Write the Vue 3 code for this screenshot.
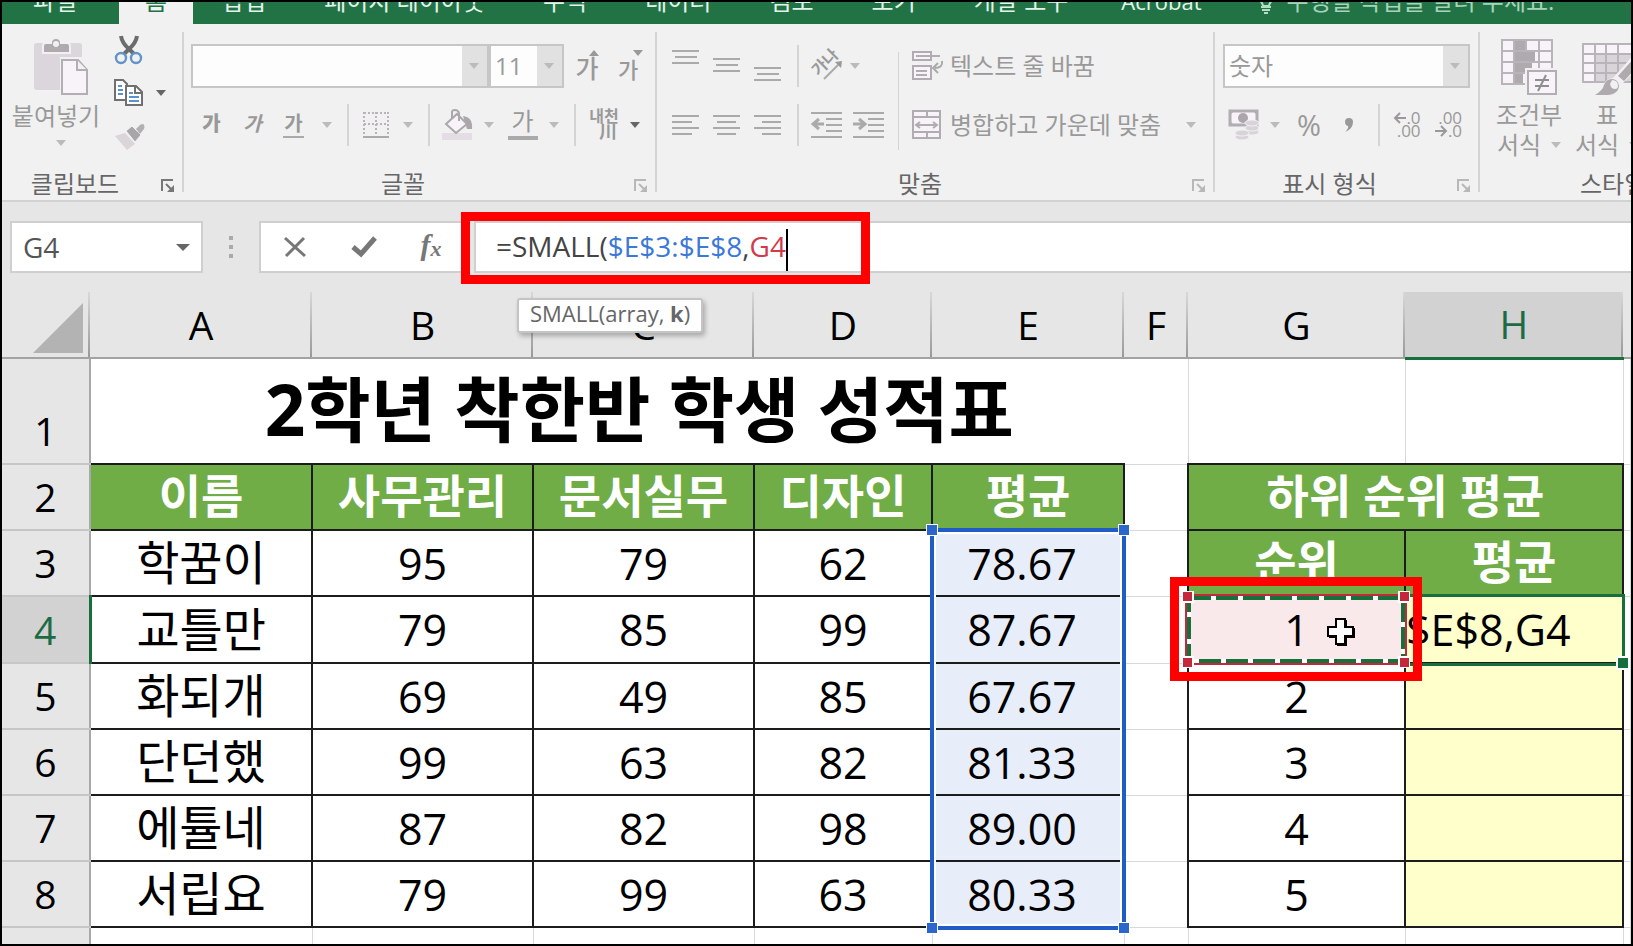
<script setup>
import { ref } from 'vue'

const tabs = ['삽입', '페이지 레이아웃', '수식', '데이터', '검토', '보기', '개발 도구']
const columns = ['A', 'B', 'C', 'D', 'E', 'F', 'G', 'H']
const students = [
  { row: 3, name: '학꿈이', scores: ['95', '79', '62'], avg: '78.67' },
  { row: 4, name: '교틀만', scores: ['79', '85', '99'], avg: '87.67', rank: '1' },
  { row: 5, name: '화되개', scores: ['69', '49', '85'], avg: '67.67', rank: '2' },
  { row: 6, name: '단던했', scores: ['99', '63', '82'], avg: '81.33', rank: '3' },
  { row: 7, name: '에튤네', scores: ['87', '82', '98'], avg: '89.00', rank: '4' },
  { row: 8, name: '서립요', scores: ['79', '99', '63'], avg: '80.33', rank: '5' }
]
const cellName = ref('G4')
const fontName = ref('')
const fontSize = ref('11')
const numberFormat = ref('숫자')
</script>

<template>
  <div class="window">
    <nav class="tabs" aria-label="리본 탭">
      <button class="tab file">파일</button>
      <button class="tab home">홈</button>
      <button v-for="t in tabs" :key="t" class="tab">{{ t }}</button>
      <button class="tab latin">Acrobat</button>
      <button class="tab tell">
        <svg width="14" height="22" viewBox="0 0 14 22" fill="none" stroke="#b5dcc4" stroke-width="2"><path d="M4 14C4 11 1 10 1 6a6 6 0 0 1 12 0c0 4-3 5-3 8zM2 15h10M3 18h8M5 21h4" /></svg>
        수행할 작업을 알려 주세요.
      </button>
    </nav>

    <section class="ribbon" aria-label="홈">
      <div class="group clipboard">
        <button class="paste">
          <svg width="56" height="60" viewBox="0 0 56 60">
            <path d="M3 5h42q3 0 3 3v11H26v33H3q-3 0-3-3V8q0-3 3-3z" fill="#dbd6db" />
            <path d="M9 15V8q0-3 3-3h5q0-5 5-5t5 5h6q3 0 3 3v7z" fill="#aeaaae" stroke="#f1f1f1" stroke-width="2" />
            <circle cx="22" cy="6" r="3" fill="#f1f1f1" />
            <path d="M28 22h16l9 10v24H28z" fill="#f7f3f8" stroke="#b3aeb4" stroke-width="2" />
            <path d="M43 22v10h10" fill="#f1f1f1" stroke="#b3aeb4" stroke-width="2" />
          </svg>
          <span>붙여넣기</span>
          <i class="arrow"></i>
        </button>
        <div class="side">
          <button aria-label="잘라내기">
            <svg width="30" height="30" viewBox="0 0 30 30" fill="none">
              <path d="M7 1q1 7 8 13l5 5M23 1q-1 7-8 13l-5 5" stroke="#6c6c6c" stroke-width="4" />
              <circle cx="7" cy="23" r="5" stroke="#6294c8" stroke-width="2.4" fill="#f1f1f1" /><circle cx="22" cy="23" r="5" stroke="#6294c8" stroke-width="2.4" fill="#f1f1f1" />
            </svg>
          </button>
          <button aria-label="복사" class="copy">
            <svg width="30" height="28" viewBox="0 0 30 28" fill="#fff" stroke="#707070" stroke-width="2">
              <path d="M11 21H1V1h8l4 4v3" /><path d="M12 7h10l6 6v13H12z" /><path d="M21 7v7h7" fill="none" />
              <path d="M4 7h4M4 11h5M4 15h5M15 14h4M15 18h10M15 22h10" stroke="#5a92cf" />
            </svg>
            <i class="arrow dark"></i>
          </button>
          <button aria-label="서식 복사">
            <svg width="32" height="28" viewBox="0 0 32 28"><path d="M1 13L11 10l10 11-8 6z" fill="#d9d5d9" /><path d="M12 8l6-5 9 9-6 7z" fill="#a9a6a9" stroke="#f1f1f1" /><path d="M22 6l4-4q3-2 4 0t0 4l-4 5z" fill="#b3b0b3" /></svg>
          </button>
        </div>
        <div class="label dark">클립보드</div>
        <button class="launch strong" aria-label="클립보드 옵션"><svg width="14" height="14" viewBox="0 0 14 14"><path d="M1 12V1h11M5 5l6 6" fill="none" stroke="currentColor" stroke-width="2" /><path d="M13 6v7H6z" fill="currentColor" /></svg></button>
      </div>

      <div class="group font">
        <div class="line r1">
          <span class="combo"><select v-model="fontName" aria-label="글꼴 이름"><option value=""></option></select><i class="arrow"></i></span>
          <span class="combo"><select v-model="fontSize" aria-label="글꼴 크기"><option>11</option></select><i class="arrow"></i></span>
          <button class="grow">가<i class="arrow up"></i></button>
          <button class="grow small">가<i class="arrow"></i></button>
        </div>
        <div class="line r2">
          <button class="ga"><b>가</b></button>
          <button class="ga"><em>가</em></button>
          <button class="ga under">가</button>
          <button aria-label="밑줄 옵션"><i class="arrow"></i></button>
          <i class="sep"></i>
          <button aria-label="테두리"><svg width="26" height="26" viewBox="0 0 26 26" fill="none" stroke="#bab3bb" stroke-width="2"><path d="M1 1h24M1 12h24M1 0v22M13 0v22M25 0v22" stroke-dasharray="2 2" /><path d="M0 25h26" stroke="#aaa" /></svg></button>
          <button aria-label="테두리 옵션"><i class="arrow"></i></button>
          <i class="sep"></i>
          <button aria-label="채우기 색"><svg width="32" height="32" viewBox="0 0 32 32"><path d="M0 24h30v7H0z" fill="#e3dde4" /><path d="M21 7q10 1 9 13h-5z" fill="#aba7ab" /><path d="M15 5l10 10-11 9L4 15z" fill="#f7f3f8" stroke="#aba7ab" stroke-width="2" /><path d="M10 10V3q0-2 3-2t4 3v8" fill="none" stroke="#aba7ab" stroke-width="2" /></svg></button>
          <button aria-label="채우기 옵션"><i class="arrow"></i></button>
          <button class="ga color">가</button>
          <button aria-label="글꼴 색 옵션"><i class="arrow"></i></button>
          <i class="sep"></i>
          <button class="phonetic"><span>내천</span><span class="han">川</span></button>
          <button aria-label="윗주 옵션"><i class="arrow dark"></i></button>
        </div>
        <div class="label">글꼴</div>
        <button class="launch" aria-label="글꼴 옵션"><svg width="14" height="14" viewBox="0 0 14 14"><path d="M1 12V1h11M5 5l6 6" fill="none" stroke="currentColor" stroke-width="2" /><path d="M13 6v7H6z" fill="currentColor" /></svg></button>
      </div>

      <div class="group align">
        <div class="line r1">
          <button aria-label="위쪽 맞춤"><svg width="28" height="32" viewBox="0 0 28 32" stroke="#aaa" stroke-width="2"><path d="M0 1h27M3 7h22M0 13h27" /></svg></button>
          <button aria-label="가운데 맞춤"><svg width="28" height="32" viewBox="0 0 28 32" stroke="#aaa" stroke-width="2"><path d="M0 9h27M3 15h22M0 21h27" /></svg></button>
          <button aria-label="아래쪽 맞춤"><svg width="28" height="32" viewBox="0 0 28 32" stroke="#aaa" stroke-width="2"><path d="M0 18h27M3 24h22M0 30h27" /></svg></button>
          <i class="sep"></i>
          <button class="orient" aria-label="방향"><span>가나</span><svg width="32" height="30" viewBox="0 0 32 30"><path d="M13 28L29 12" stroke="#aaa" stroke-width="2" /><path d="M31 10l-1 7-6-6z" fill="#999" /></svg></button>
          <button aria-label="방향 옵션"><i class="arrow"></i></button>
          <i></i>
          <i class="sep tall"></i>
          <button class="wide"><svg width="32" height="30" viewBox="0 0 32 30" fill="#f7f3f8" stroke="#b1abb2" stroke-width="2"><path d="M1 1h18v8H1zM1 15h18v13H1z" /><path d="M4 5h24M4 20h11M4 24h11" /><path d="M30 10q1 7-7 7M26 12l-5 5 5 5" fill="none" stroke="#aaa" /></svg>텍스트 줄 바꿈</button>
        </div>
        <div class="line r2">
          <button aria-label="왼쪽 맞춤"><svg width="28" height="20" viewBox="0 0 28 20" stroke="#aaa" stroke-width="2"><path d="M0 1h27M0 7h20M0 13h27M0 19h20" /></svg></button>
          <button aria-label="가운데"><svg width="28" height="20" viewBox="0 0 28 20" stroke="#aaa" stroke-width="2"><path d="M0 1h27M4 7h19M0 13h27M4 19h19" /></svg></button>
          <button aria-label="오른쪽 맞춤"><svg width="28" height="20" viewBox="0 0 28 20" stroke="#aaa" stroke-width="2"><path d="M0 1h27M8 7h19M0 13h27M8 19h19" /></svg></button>
          <i class="sep"></i>
          <button aria-label="내어쓰기"><svg width="32" height="26" viewBox="0 0 32 26" stroke="#aaa" stroke-width="2" fill="none"><path d="M0 1h31M15 7h16M15 13h16M15 19h16M0 25h31" /><path d="M13 12H3M8 7l-6 5 6 5" stroke-width="3" /></svg></button>
          <button aria-label="들여쓰기"><svg width="32" height="26" viewBox="0 0 32 26" stroke="#aaa" stroke-width="2" fill="none"><path d="M0 1h31M15 7h16M15 13h16M15 19h16M0 25h31" /><path d="M0 12h10M6 7l6 5-6 5" stroke-width="3" /></svg></button>
          <i class="sep tall"></i>
          <button class="wide"><svg width="32" height="30" viewBox="0 0 32 30" fill="#f7f3f8" stroke="#b1abb2" stroke-width="2"><path d="M1 1h27v27H1zM1 7h27M1 22h27M15 1v6M15 22v6" /><path d="M5 15h19M8 12l-4 3 4 3M21 12l4 3-4 3" fill="none" /></svg>병합하고 가운데 맞춤</button>
          <button aria-label="병합 옵션"><i class="arrow"></i></button>
        </div>
        <div class="label">맞춤</div>
        <button class="launch" aria-label="맞춤 옵션"><svg width="14" height="14" viewBox="0 0 14 14"><path d="M1 12V1h11M5 5l6 6" fill="none" stroke="currentColor" stroke-width="2" /><path d="M13 6v7H6z" fill="currentColor" /></svg></button>
      </div>

      <div class="group number">
        <div class="line r1">
          <span class="combo"><select v-model="numberFormat" aria-label="표시 형식"><option>숫자</option></select><i class="arrow"></i></span>
        </div>
        <div class="line r2">
          <button aria-label="회계 표시 형식"><svg width="32" height="32" viewBox="0 0 32 32"><path d="M2 2h27v14H2z" fill="#f7f3f8" stroke="#b1adb2" stroke-width="3" /><path d="M1 1h6L1 7zM30 1v6l-6-6zM1 17v-6l6 6z" fill="#b1adb2" /><circle cx="15" cy="9" r="5" fill="#aaa6aa" /><g fill="#d8d3d9" stroke="#f1f1f1"><ellipse cx="24" cy="23" rx="7" ry="3" /><ellipse cx="24" cy="19" rx="7" ry="3" /><ellipse cx="24" cy="14" rx="7" ry="3" /><ellipse cx="14" cy="28" rx="7" ry="3" /><ellipse cx="14" cy="24" rx="7" ry="3" /></g></svg></button>
          <button aria-label="회계 옵션"><i class="arrow"></i></button>
          <button class="percent">%</button>
          <button aria-label="쉼표 스타일"><svg width="10" height="16" viewBox="0 0 10 16"><path d="M9 5q0 7-8 10 4-4 3-6-3-1-3-4 0-4 4-4t4 4z" fill="#999" /></svg></button>
          <i class="sep"></i>
          <button class="decimals"><span><svg width="13" height="12" viewBox="0 0 13 12" fill="none" stroke="#999" stroke-width="2"><path d="M13 6H2M7 1L2 6l5 5" /></svg>.0</span><span>.00</span></button>
          <button class="decimals"><span>.00</span><span><svg width="13" height="12" viewBox="0 0 13 12" fill="none" stroke="#999" stroke-width="2"><path d="M0 6h11M6 1l5 5-5 5" /></svg>.0</span></button>
        </div>
        <div class="label">표시 형식</div>
        <button class="launch" aria-label="표시 형식 옵션"><svg width="14" height="14" viewBox="0 0 14 14"><path d="M1 12V1h11M5 5l6 6" fill="none" stroke="currentColor" stroke-width="2" /><path d="M13 6v7H6z" fill="currentColor" /></svg></button>
      </div>

      <div class="group styles">
        <button class="big">
          <svg width="58" height="58" viewBox="0 0 58 58">
            <path d="M2 2h50v44H2z" fill="#f7f3f8" />
            <path d="M14 2h12v11H14zM14 13h21v11H14zM14 24h18v11H14zM14 35h9v11h-9z" fill="#aeaaae" />
            <path d="M2 2h50v44H2zM14 2v44M26 2v11M39 2v44M2 13h50M2 24h50M2 35h50" fill="none" stroke="#b9b4ba" stroke-width="2" />
            <path d="M25 30h33v28H25z" fill="#f1f1f1" /><path d="M28 33h28v23H28z" fill="#f7f3f8" stroke="#b3aeb4" stroke-width="2" />
            <path d="M35 42h14M35 48h14M46 37l-8 16" stroke="#8f8f8f" stroke-width="2" />
          </svg>
          <span>조건부</span><span>서식 <i class="arrow"></i></span>
        </button>
        <button class="big">
          <svg width="58" height="58" viewBox="0 0 58 58">
            <path d="M5 6h50v38H5z" fill="#f7f3f8" /><path d="M17 16h38v28H17z" fill="#d9d4da" />
            <path d="M5 6h50v38H5zM17 6v38M28 6v38M40 6v38M5 16h50M5 25h50M5 35h50" fill="none" stroke="#b9b4ba" stroke-width="2" />
            <path d="M16 58q8-4 9-10 2-7 10-8L58 14v18L40 50q-4 8-14 8z" fill="#f1f1f1" />
            <path d="M17 57q8-5 9-10 2-6 8-6t7 7q-1 10-16 9z" fill="#aeaaae" /><path d="M34 42q6 0 6 6 0 3-3 3-4 0-5-5z" fill="#f1f1f1" /><path d="M40 38l18-20v12L46 43z" fill="#aeaaae" />
          </svg>
          <span>표</span><span>서식 <i class="arrow"></i></span>
        </button>
        <div class="label">스타일</div>
      </div>
    </section>

    <section class="formula-row">
      <div class="name-box"><input v-model="cellName" aria-label="이름 상자" /><i class="arrow dark"></i></div>
      <div class="dots"><i></i><i></i><i></i></div>
      <div class="actions">
        <button aria-label="취소"><svg width="24" height="22" viewBox="0 0 24 22" stroke="#777" stroke-width="3"><path d="M2 2l20 18M21 2L3 20" /></svg></button>
        <button aria-label="입력"><svg width="26" height="22" viewBox="0 0 26 22" fill="none" stroke="#777" stroke-width="5"><path d="M2 11l8 7L24 2" /></svg></button>
        <button class="fx" aria-label="함수 삽입"><i>f</i><i class="x">x</i></button>
      </div>
      <div class="formula" role="textbox" aria-label="수식 입력줄" contenteditable="true" spellcheck="false">=SMALL(<span class="blue">$E$3:$E$8</span>,<span class="red">G4</span><i class="caret"></i></div>
      <div class="mark formula-mark"></div>
      <div class="hint">SMALL(array, <b>k</b>)</div>
    </section>

    <main class="sheet">
      <table>
        <colgroup><col class="c-row" /><col v-for="c in columns" :key="c" :class="'c-' + c.toLowerCase()" /><col /></colgroup>
        <thead>
          <tr>
            <th class="corner"><svg width="50" height="50" viewBox="0 0 50 50"><path d="M50 0v50H0z" fill="#b3b3b3" /></svg></th>
            <th v-for="c in columns" :key="c" scope="col" :class="{ current: c === 'H' }">{{ c }}</th>
            <th></th>
          </tr>
        </thead>
        <tbody>
          <tr class="first">
            <th scope="row">1</th>
            <td colspan="6" class="title">2학년 착한반 학생 성적표</td>
            <td></td><td></td><td></td>
          </tr>
          <tr>
            <th scope="row">2</th>
            <td v-for="h in ['이름', '사무관리', '문서실무', '디자인', '평균']" :key="h" class="box head">{{ h }}</td>
            <td></td>
            <td colspan="2" class="box head">하위 순위 평균</td>
            <td></td>
          </tr>
          <tr v-for="s in students" :key="s.row" :class="{ editing: s.row === 4 }">
            <th scope="row" :class="{ current: s.row === 4 }">{{ s.row }}</th>
            <td class="box name">{{ s.name }}</td>
            <td v-for="(n, i) in s.scores" :key="i" class="box">{{ n }}</td>
            <td class="box avg">{{ s.avg }}</td>
            <td></td>
            <template v-if="s.row === 3"><td class="box head">순위</td><td class="box head">평균</td></template>
            <template v-else>
              <td class="box" :class="{ picked: s.row === 4 }">{{ s.rank }}</td>
              <td class="box result">{{ s.row === 4 ? '$E$8,G4' : '' }}</td>
            </template>
            <td></td>
          </tr>
          <tr><th scope="row"></th><td v-for="n in 9" :key="n"></td></tr>
        </tbody>
      </table>

      <div class="range"><i class="tl"></i><i class="tr"></i><i class="bl"></i><i class="br"></i></div>
      <div class="active"><i></i></div>
      <svg class="ants" width="228" height="77" viewBox="0 0 228 77" fill="none">
        <rect x="4" y="4" width="220" height="69" stroke="#c4283a" stroke-width="2" />
        <rect x="7" y="7" width="214" height="63" stroke="#fff" stroke-width="4" />
        <rect x="7" y="7" width="214" height="63" stroke="#17703c" stroke-width="4" stroke-dasharray="22 5" />
        <g fill="#c4283a" stroke="#fff" stroke-width="2"><path d="M0 0h11v11H0zM217 0h11v11h-11zM0 66h11v11H0zM217 66h11v11h-11z" /></g>
      </svg>
      <div class="mark cell-mark"></div>
      <svg class="pointer" width="30" height="30" viewBox="0 0 30 30"><path d="M11 3h10v8h8v10h-8v8H11v-8H3V11h8z" fill="#000" /><path d="M10 2h9v8h8v9h-8v8h-9v-8H2v-9h8z" fill="#fff" stroke="#000" stroke-width="2" /></svg>
    </main>
  </div>
</template>

<style>
body { margin: 0; }
</style>

<style scoped>
* { box-sizing: border-box; }
.window { display: flex; flex-direction: column; height: 100vh; border: 2px solid #000; overflow: hidden; background: #e6e6e6; color: #000; font-family: "Open Sans", "Noto Sans CJK KR", sans-serif; }
button { display: flex; align-items: center; justify-content: center; margin: 0; padding: 0; border: 0; background: none; color: inherit; font: inherit; white-space: nowrap; }
svg { display: block; flex: none; }
.arrow { display: block; flex: none; width: 0; height: 0; border: 5px solid transparent; border-top: 6px solid #bbb; border-bottom: 0; }
.arrow.up { border-top: 0; border-bottom: 6px solid #999; }
.arrow.dark { border-top-color: #666; }

.tabs { display: flex; flex: none; height: 22px; overflow: hidden; background: #217346; color: #e4f3ea; font-size: 24px; line-height: 26px; }
.tab { align-items: flex-end; padding: 0 29px 10px; height: 22px; }
.tab.file { width: 117px; padding: 0 41px 10px 30px; }
.tab.home { width: 74px; padding: 0 0 10px; background: #f1f1f1; color: #217346; }
.tab.latin { padding-left: 24px; font-size: 22px; }
.tab.tell { gap: 14px; padding-left: 28px; color: #a8d3b9; }

.ribbon { display: flex; flex: none; height: 176px; padding-top: 8px; background: #f1f1f1; color: #999; font-size: 24px; line-height: 28px; overflow: hidden; }
.group { position: relative; flex: none; display: flex; flex-direction: column; height: 168px; background: linear-gradient(#d4d4d4, #d4d4d4) right top / 2px 160px no-repeat; }
.clipboard { width: 182px; display: grid; grid-template: 135px 33px / 108px 1fr; }
.font { width: 473px; padding-left: 7px; }
.align { width: 558px; padding-left: 8px; }
.number { width: 265px; padding-left: 8px; }
.styles { flex: 1 0 150px; display: grid; grid-template: 135px 33px / 98px 58px; padding-left: 0; background: none; }
.label { grid-column: 1 / -1; margin-top: auto; height: 33px; line-height: 34px; text-align: center; color: #666; padding-right: 36px; }
.font .label { padding-right: 42px; }
.align .label { padding-right: 40px; }
.number .label { padding-right: 44px; }
.styles .label { padding: 0 0 0 100px; text-align: left; white-space: nowrap; }
.launch { position: absolute; right: 9px; bottom: 7px; color: #b8b8b8; }
.launch.strong { color: #777; }
.paste { flex-direction: column; justify-content: flex-start; padding-top: 6px; }
.paste svg { margin-left: 12px; }
.paste span { margin: 4px 0 10px; }
.paste .arrow { margin-left: 10px; }
.side { display: grid; grid-template-rows: 36px 50px 38px; justify-items: start; padding-left: 4px; }
.copy { gap: 12px; }
.line { display: grid; align-items: center; justify-items: center; }
.line > button { height: 100%; }
.r1 { height: 68px; }
.r2 { height: 50px; }
.font .r1 { grid-template-columns: 298px 75px 46px 36px; }
.font .r2 { grid-template-columns: 41px 41px 41px 26px 15px 42px 22px 20px 38px 24px 43px 20px 21px 38px 24px; }
.align .r1 { grid-template-columns: 41px 41px 42px 17px 42px 14px 28px 16px auto; justify-content: start; }
.align .r2 { grid-template-columns: 41px 41px 42px 17px 42px 42px 16px 266px 38px; justify-content: start; }
.number .r1 { grid-template-columns: 247px; }
.number .r2 { grid-template-columns: 41px 22px 46px 34px 26px 30px 53px; }
.sep { width: 2px; height: 42px; background: #d4d4d4; }
.sep.tall { width: 1px; height: 100%; }
.r1 .sep.tall { height: 48px; align-self: end; }
.combo { display: flex; align-items: center; width: 100%; height: 44px; border: 2px solid #c6c6c6; background: linear-gradient(#e1e1e1, #e1e1e1) right / 25px 100% no-repeat #fdfdfd; padding-right: 8px; }
.combo select { flex: 1; min-width: 0; height: 100%; border: 0; padding: 0 4px; appearance: none; background: none; color: #999; font: inherit; }
.grow { position: relative; padding-top: 4px; font-size: 25px; font-weight: 500; }
.grow.small { font-size: 22px; padding-top: 6px; }
.grow .arrow { position: absolute; right: 0; top: 18px; border-top-color: #999; }
.grow.small .arrow { right: -5px; }
.ga { font-size: 20px; font-weight: bold; padding-bottom: 2px; }
.ga.under::before { content: ""; position: absolute; width: 21px; height: 2px; margin-top: 25px; background: #aaa; }
.ga.color { font-size: 24px; font-weight: normal; padding-bottom: 8px; }
.ga.color::before { content: ""; position: absolute; width: 30px; height: 4px; margin-top: 33px; background: #aaa; }
.phonetic { flex-direction: column; font-size: 16px; font-weight: bold; line-height: 15px; padding-bottom: 2px; }
.phonetic .han { font-size: 18px; padding-left: 8px; }
.orient { position: relative; width: 32px; }
.orient span { position: absolute; left: -1px; top: 16px; font-size: 16px; font-weight: bold; transform: rotate(-45deg); }
.wide { gap: 6px; padding-left: 6px; justify-self: start; }
.percent { font-size: 29px; }
.decimals { flex-direction: column; align-items: flex-end; font-size: 17px; line-height: 13px; padding-bottom: 2px; }
.decimals span { display: flex; align-items: center; }
.big { flex-direction: column; justify-content: flex-start; padding: 6px 0 0; }
.big span { display: flex; gap: 10px; align-items: center; height: 30px; }
.big svg + span { margin-top: 4px; }

.formula-row { position: relative; display: flex; flex: none; height: 92px; padding: 19px 0 19px 8px; border-top: 2px solid #d2d2d2; }
.name-box { display: flex; align-items: center; width: 193px; height: 52px; padding-right: 11px; border: 2px solid #cfcfcf; background: #fff; }
.name-box input { flex: 1; min-width: 0; padding: 0 11px; border: 0; background: none; color: #555; font: inherit; font-size: 28px; }
.name-box .arrow { border-width: 7px 7px 0; }
.dots { display: grid; align-content: center; justify-content: center; gap: 5px; width: 56px; height: 52px; }
.dots i { width: 4px; height: 4px; background: #aaa; }
.actions { display: grid; grid-template-columns: 68px 69px 66px; width: 207px; height: 52px; border: 2px solid #cfcfcf; background: #fff; }
.fx { font-family: "Liberation Serif", serif; font-size: 30px; font-weight: bold; color: #777; padding-bottom: 4px; }
.fx .x { font-size: 22px; padding-top: 8px; }
.formula { flex: 1; height: 52px; margin-left: 8px; padding-left: 20px; border: 2px solid #cfcfcf; border-right: 0; background: #fff; color: #444; font-size: 28px; line-height: 46px; white-space: nowrap; outline: 0; }
.blue { color: #3c78d8; }
.red { color: #d13a4a; }
.caret { display: inline-block; width: 2px; height: 42px; background: #000; vertical-align: middle; }
.mark { position: absolute; border: 9px solid #f00; pointer-events: none; }
.formula-mark { left: 459px; top: 10px; width: 409px; height: 72px; }
.hint { position: absolute; z-index: 2; left: 515px; top: 96px; height: 35px; padding: 0 11px; border: 2px solid #c4c4c4; border-radius: 3px; background: #fff; box-shadow: 2px 3px 5px #0004; color: #666; font-size: 22px; line-height: 26px; }

.sheet { position: relative; flex: 1; min-height: 0; overflow: hidden; background: #fff; }
table { width: 100%; table-layout: fixed; border-collapse: collapse; font-size: 43px; line-height: 60px; }
.c-row { width: 88px; }
.c-a { width: 222px; }
.c-b, .c-c { width: 221px; }
.c-d { width: 178px; }
.c-e { width: 192px; }
.c-f { width: 64px; }
.c-g { width: 217px; }
.c-h { width: 218px; }
tr { height: 66px; }
.first { height: 106px; }
.editing { height: 67px; }
th, td { padding: 0; text-align: center; white-space: nowrap; overflow: hidden; }
th { background: #e6e6e6; font-size: 39px; font-weight: normal; }
thead th { border-bottom: 2px solid #a3a3a3; background: linear-gradient(#d8d8d8, #999) right / 2px 100% no-repeat #e6e6e6; }
thead th:last-child { background: #e6e6e6; }
thead th.current { border-bottom: 3px solid #17703c; background-color: #d2d2d2; color: #1d6b45; }
.corner svg { margin: 6px 7px 0 auto; }
tbody th { border-right: 2px solid #a8a8a8; border-bottom: 2px solid #c6c6c6; }
tbody th.current { border-right: 3px solid #17703c; background: #d2d2d2; color: #1d6b45; }
.first th { vertical-align: bottom; padding-bottom: 2px; }
td { border: 1px solid #d9d9d9; padding-top: 1px; }
.title { padding-bottom: 6px; font-size: 71px; line-height: 90px; font-weight: bold; border: 0; }
.box { border: 2px solid #1c1c1c; }
.head { padding: 0 0 4px; background: #70ad47; color: #fff; font-size: 46px; font-weight: bold; }
.name { padding: 0 0 2px; font-size: 47px; }
.avg { background: #e8eef9; padding-right: 12px; }
.picked { background: #fae9eb; }
.result { background: #ffc; text-align: left; }

.range { position: absolute; left: 928px; top: 236px; width: 196px; height: 402px; border: 4px solid #1f5cc8; box-shadow: inset 0 0 0 2px #fff; }
.range i { position: absolute; width: 12px; height: 12px; background: #2b66cc; border: 1px solid #fff; }
.tl, .bl { left: -8px; }
.tr, .br { right: -8px; }
.tl, .tr { top: -8px; }
.bl, .br { bottom: -8px; }
.active { position: absolute; left: 1402px; top: 302px; width: 221px; height: 72px; border: 3px solid #17703c; }
.active i { position: absolute; right: -6px; bottom: -5px; width: 10px; height: 10px; background: #17703c; outline: 2px solid #fff; }
.ants { position: absolute; left: 1180px; top: 299px; }
.cell-mark { left: 1168px; top: 285px; width: 252px; height: 104px; }
.pointer { position: absolute; left: 1324px; top: 325px; }
</style>
